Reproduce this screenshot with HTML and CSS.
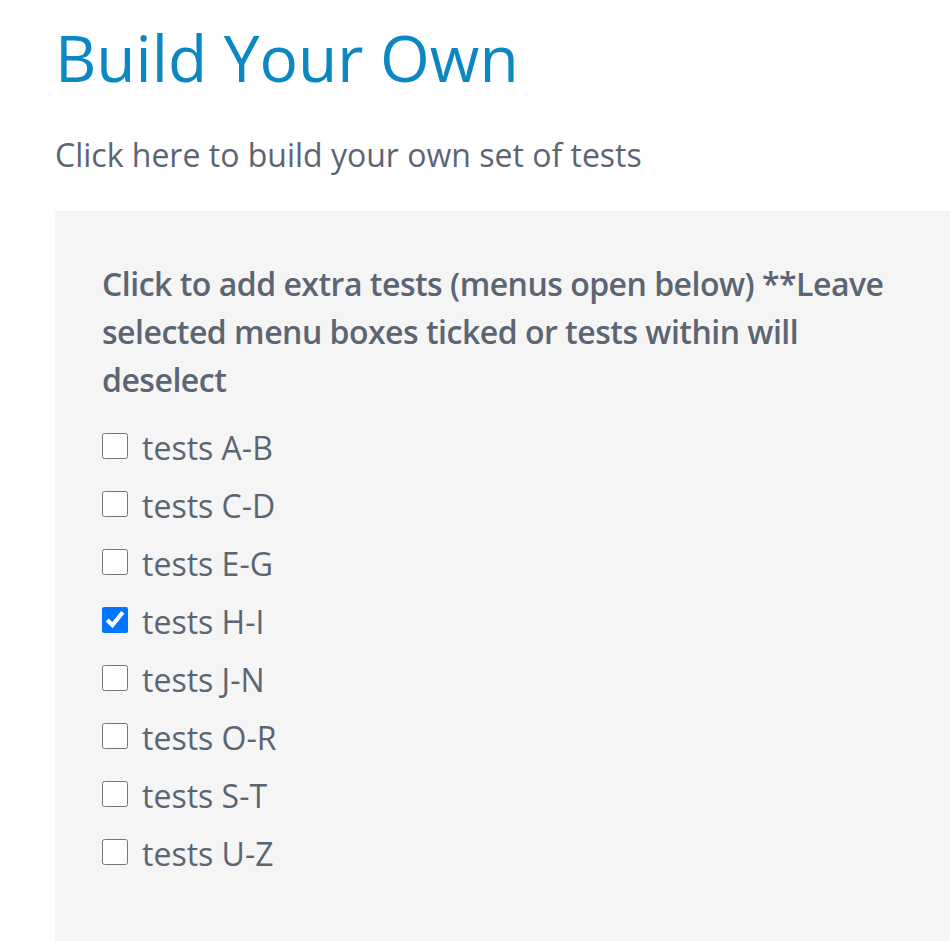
FILE: index.html
```html
<!DOCTYPE html>
<html lang="en">
<head>
    <meta charset="UTF-8">
    <meta name="viewport" content="width=device-width, initial-scale=1.0">
    <title>Build Your Own</title>
    <link rel="stylesheet" href="styles.css">
</head>
<body>

    <div class="page">
        <h1>Build Your Own</h1>
        <p class="intro">Click here to build your own set of tests</p>

        <div class="builder">
            <h3>Click to add extra tests (menus open below) **Leave selected menu boxes ticked or tests within will deselect</h3>
            <label class="option"><input type="checkbox"> tests A-B</label>
            <label class="option"><input type="checkbox"> tests C-D</label>
            <label class="option"><input type="checkbox"> tests E-G</label>
            <label class="option"><input type="checkbox" checked> tests H-I</label>
            <label class="option"><input type="checkbox"> tests J-N</label>
            <label class="option"><input type="checkbox"> tests O-R</label>
            <label class="option"><input type="checkbox"> tests S-T</label>
            <label class="option"><input type="checkbox"> tests U-Z</label>
        </div>
    </div>

</body>
</html>
```

FILE: styles.css
```css
/* General Styling */
body {
    font-family: 'Open Sans', sans-serif;
    background: #fff;
    color: #5b6573;
    margin: 0;
    overflow: hidden;
}
.page {
    padding: 0 0 0 55px;
}
h1 {
    font-size: 64px;
    font-weight: 400;
    color: #0b87c1;
    margin: 0;
    padding-top: 14px;
    line-height: 88px;
}
.intro {
    font-size: 32px;
    margin: 31px 0 34px;
    line-height: 44px;
}
.builder {
    background: #f5f5f5;
    padding: 49px 47px 60px;
    min-height: 800px;
}
.builder h3 {
    font-size: 32px;
    font-weight: 600;
    letter-spacing: -0.5px;
    line-height: 48px;
    margin: 0 0 15px;
    max-width: 800px;
}
.option {
    display: flex;
    align-items: center;
    font-size: 32px;
    line-height: 58px;
}
.option input {
    width: 26px;
    height: 26px;
    margin: 0 14px 4px 0;
}
```
